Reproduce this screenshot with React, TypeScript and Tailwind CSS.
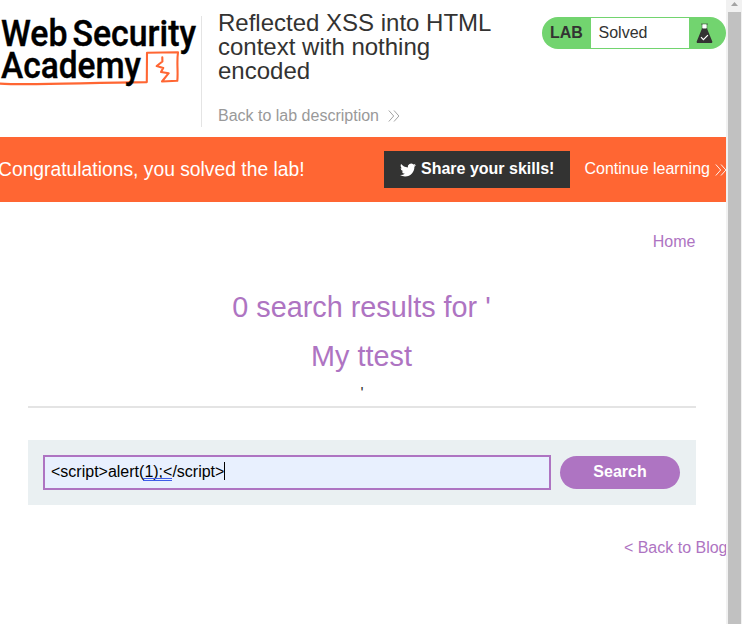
function Logo() {
  return (
    <svg className="block h-[80px] w-[200px]" viewBox="0 0 200 80" fill="none">
      <g stroke="#ff6633" strokeLinejoin="round" strokeLinecap="round">
        <path d="M0 71.6C30 73.4 80 70.8 146.8 70.1L147 40.8L178 40.3C176.5 50 178.3 60 177.3 68.8L162 69.5L168.7 61.2L161 60L163.2 56L156.7 54L162.4 49.5L162.3 45.2" strokeWidth="2.1" />
      </g>
      <g fill="#000" stroke="#000" strokeWidth="0.4" fontFamily="Roboto, sans-serif" fontWeight="500" fontSize="37.5">
        <text x="1" y="33.6" textLength="66.5" lengthAdjust="spacingAndGlyphs">Web</text>
        <text x="72.5" y="33.6" textLength="123.5" lengthAdjust="spacingAndGlyphs">Security</text>
        <text x="1" y="66.2" textLength="140" lengthAdjust="spacingAndGlyphs">Academy</text>
      </g>
    </svg>
  );
}

function Chevrons({ className }: { className?: string }) {
  return (
    <svg className={className} width="12" height="12" viewBox="0 0 12 12" fill="none" stroke="currentColor" strokeWidth="0.9">
      <path d="M.8 .5 5.7 6 .8 11.5M6 .5 10.9 6 6 11.5" />
    </svg>
  );
}

function Flask() {
  return (
    <svg width="17" height="21" viewBox="0 0 17 21" fill="none">
      <path d="M6.4 1.5h4.2v5H6.4z" fill="#fff" />
      <path d="M5 1h7M6.2 1v5M10.8 1v5" stroke="#333332" strokeOpacity=".75" strokeWidth="0.8" />
      <path d="M6 5.5h5l5.2 12.7c.5 1.2-.1 1.8-1.2 1.8H2c-1.1 0-1.7-.6-1.2-1.8z" fill="#333332" />
      <path d="M6.5 1.5h4v3.5h-4z" fill="#fff" />
      <path d="m5 14.2 2.4 2.5 4.5-4.5" stroke="#fff" strokeWidth="1.2" />
    </svg>
  );
}

function Twitter() {
  return (
    <svg width="16" height="16" viewBox="0 0 24 24" fill="#fff">
      <path d="M23.953 4.57a10 10 0 01-2.825.775 4.958 4.958 0 002.163-2.723c-.951.555-2.005.959-3.127 1.184a4.92 4.92 0 00-8.384 4.482C7.69 8.095 4.067 6.13 1.64 3.162a4.822 4.822 0 00-.666 2.475c0 1.71.87 3.213 2.188 4.096a4.904 4.904 0 01-2.228-.616v.06a4.923 4.923 0 003.946 4.827 4.996 4.996 0 01-2.212.085 4.936 4.936 0 004.604 3.417 9.867 9.867 0 01-6.102 2.105c-.39 0-.779-.023-1.17-.067a13.995 13.995 0 007.557 2.209c9.053 0 13.998-7.496 13.998-13.985 0-.21 0-.42-.015-.63A9.935 9.935 0 0024 4.59z" />
    </svg>
  );
}

export default function App() {
  return (
    <div className="flex h-[624px] w-[742px] overflow-hidden bg-white font-['Liberation_Sans',Arial,sans-serif] text-[16px] leading-[18px] text-[#333332]">
      <div className="flex w-[726px] shrink-0 flex-col overflow-hidden">
        <header className="flex h-[137px] shrink-0 items-start">
          <div className="mt-[12px] w-[201px] shrink-0"><Logo /></div>
          <div className="mt-4 h-[111px] w-px shrink-0 bg-[#e4e4e4]" />
          <div className="ml-4 w-[290px] pt-[11px]">
            <h1 className="text-[24px] leading-6">Reflected XSS into HTML context with nothing encoded</h1>
            <a className="mt-[24px] flex items-center gap-[9px] text-[#999]">
              <span className="whitespace-nowrap">Back to lab description</span>
              <Chevrons className="-mt-px" />
            </a>
          </div>
          <div className="mt-[17px] ml-auto flex h-8 w-[184px] overflow-hidden rounded-full bg-[#72d46f]">
            <span className="w-[49px] pt-[7px] pl-2 font-bold">LAB</span>
            <span className="my-px w-[98px] bg-white pt-[6px] pl-[7.5px]">Solved</span>
            <span className="pt-[6px] pl-[7px]"><Flask /></span>
          </div>
        </header>
        <section className="flex h-[65px] shrink-0 items-start bg-[#ff6633] text-white">
          <p className="-ml-[2px] w-[386px] shrink-0 pt-[22px] text-[19.3px] leading-[22px]">Congratulations, you solved the lab!</p>
          <button className="mt-[14px] flex h-[37px] w-[186px] shrink-0 items-center gap-[5px] bg-[#333332] pb-px pl-4 font-bold">
            <span className="pt-px"><Twitter /></span>
            <span className="whitespace-nowrap">Share your skills!</span>
          </button>
          <a className="mt-[23px] ml-[14.5px] flex shrink-0 items-center gap-[5px] whitespace-nowrap">
            Continue learning <Chevrons className="mt-[2px]" />
          </a>
        </section>
        <main className="flex flex-col pl-7">
          <a className="mt-[31px] mr-[30.5px] self-end text-[#ae74c2]">Home</a>
          <div className="mr-[30px] flex h-[157px] flex-col items-center border-b-2 border-[#e4e4e4] pt-[40px]">
            <h2 className="mr-px text-[28.8px] leading-[33px] text-[#ae74c2]">0 search results for '</h2>
            <h2 className="mt-4 mr-px text-[28.8px] leading-[33px] text-[#ae74c2]">My ttest</h2>
            <span className="mt-[12px]">'</span>
          </div>
          <div className="mt-8 mr-[30px] flex h-[65px] items-start bg-[#eaf0f2] pl-[15px]">
            <div className="mt-[15px] flex h-[35px] w-[508px] items-start border-2 border-[#ae74c2] bg-[#e8f0fe] pt-[6px] pl-[6px] text-black">
              <span className="whitespace-pre">&lt;script&gt;alert(<span className="relative">1);&lt;<span className="absolute -bottom-px -left-[1px] h-[3px] w-[29px] border-y border-[#3f5ce8]" /></span>/script&gt;</span>
              <span className="-mt-px h-[18px] w-px bg-black" />
            </div>
            <button className="mt-4 ml-[9px] h-[33px] w-[120px] rounded-full bg-[#ae74c2] pb-[2px] font-bold text-white">Search</button>
          </div>
          <a className="mt-[34px] -mr-[1.5px] self-end whitespace-nowrap text-[#ae74c2]">&lt; Back to Blog</a>
        </main>
      </div>
      <aside className="flex w-4 shrink-0 flex-col items-start bg-[#f1f1f1]">
        <svg className="h-3 w-4 shrink-0" viewBox="0 0 16 12"><path d="M8.5 2 12 6H5z" fill="#a3a3a3" /></svg>
        <div className="ml-[2px] w-[13px] grow bg-[#c1c1c1]" />
      </aside>
    </div>
  );
}
